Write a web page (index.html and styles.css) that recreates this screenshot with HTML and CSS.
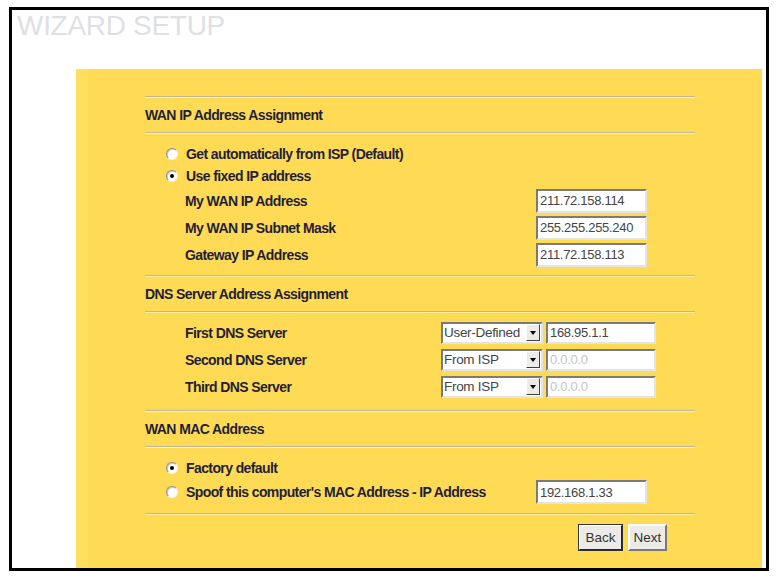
FILE: index.html
```html
<!DOCTYPE html>
<html lang="en">

<head>
    <meta charset="UTF-8">
    <title>Wizard Setup</title>
    <link rel="stylesheet" href="styles.css">
</head>

<body>
    <div class="frame">
        <h1 class="title">WIZARD SETUP</h1>

        <div class="panel">
            <div class="content">
                <div class="sep"></div>
                <div class="section-head">WAN IP Address Assignment</div>
                <div class="sep"></div>

                <div class="choices">
                    <div class="choice"><span class="radio"></span>Get automatically from ISP (Default)</div>
                    <div class="choice"><span class="radio on"></span>Use fixed IP address</div>
                </div>

                <div class="field">
                    <span class="label">My WAN IP Address</span>
                    <input class="text" type="text" value="211.72.158.114">
                </div>
                <div class="field">
                    <span class="label">My WAN IP Subnet Mask</span>
                    <input class="text" type="text" value="255.255.255.240">
                </div>
                <div class="field">
                    <span class="label">Gateway IP Address</span>
                    <input class="text" type="text" value="211.72.158.113">
                </div>

                <div class="sep spaced-7"></div>
                <div class="section-head">DNS Server Address Assignment</div>
                <div class="sep"></div>

                <div class="dns-rows">
                    <div class="dns">
                        <span class="label">First DNS Server</span>
                        <div class="combo">
                            <select>
                                <option selected>User-Defined</option>
                                <option>From ISP</option>
                                <option>None</option>
                            </select>
                            <span class="arrow"></span>
                        </div>
                        <input class="text small" type="text" value="168.95.1.1">
                    </div>
                    <div class="dns">
                        <span class="label">Second DNS Server</span>
                        <div class="combo">
                            <select>
                                <option>User-Defined</option>
                                <option selected>From ISP</option>
                                <option>None</option>
                            </select>
                            <span class="arrow"></span>
                        </div>
                        <input class="text small" type="text" value="0.0.0.0" disabled>
                    </div>
                    <div class="dns">
                        <span class="label">Third DNS Server</span>
                        <div class="combo">
                            <select>
                                <option>User-Defined</option>
                                <option selected>From ISP</option>
                                <option>None</option>
                            </select>
                            <span class="arrow"></span>
                        </div>
                        <input class="text small" type="text" value="0.0.0.0" disabled>
                    </div>
                </div>

                <div class="sep spaced-10"></div>
                <div class="section-head">WAN MAC Address</div>
                <div class="sep"></div>

                <div class="choices">
                    <div class="choice"><span class="radio on"></span>Factory default</div>
                    <div class="choice spoof">
                        <span class="radio"></span>
                        <span class="spoof-label">Spoof this computer's MAC Address - IP Address</span>
                        <input class="text" type="text" value="192.168.1.33">
                    </div>
                </div>

                <div class="sep spaced-8"></div>

                <div class="buttons">
                    <button class="btn default">Back</button>
                    <button class="btn">Next</button>
                </div>
            </div>
        </div>
    </div>
</body>

</html>
```

FILE: styles.css
```css
* {
    box-sizing: border-box;
    margin: 0;
    padding: 0;
}

body {
    background-color: #fff;
    font-family: 'Liberation Sans', Arial, sans-serif;
}

.frame {
    width: 760px;
    height: 564px;
    margin: 7px 0 0 9px;
    border: 3px solid #000;
    display: flex;
    flex-direction: column;
}

.title {
    padding: 2px 0 0 5px;
    font-size: 28px;
    line-height: 28px;
    font-weight: normal;
    letter-spacing: -0.3px;
    color: #dfe0e4;
}

.panel {
    flex: 1;
    margin: 29px 4px 0 64px;
    padding: 27px 0 0 57px;
    background-color: #ffda55;
    border-left: 12px solid #ffe05e;
}

.content {
    width: 550px;
    color: #1f1f3a;
    font-size: 14px;
    font-weight: bold;
    letter-spacing: -0.6px;
    white-space: nowrap;
}

.sep {
    height: 2px;
    border-top: 1px solid #bdb79c;
    border-bottom: 1px solid #fff0a6;
}

.spaced-7 {
    margin-top: 7px;
}

.spaced-8 {
    margin-top: 8px;
}

.spaced-10 {
    margin-top: 10px;
}

.section-head {
    height: 34px;
    line-height: 34px;
}

.choices {
    margin-top: 9px;
    padding-left: 21px;
}

.choice {
    height: 22px;
    display: flex;
    align-items: center;
    gap: 8px;
}

.choice.spoof {
    height: 26px;
}

.spoof-label {
    width: 342px;
}

.radio {
    width: 12px;
    height: 12px;
    border-radius: 50%;
    background-color: #fff;
    border: 1px solid;
    border-color: #8c8c8c #f4f4f4 #f4f4f4 #8c8c8c;
    box-shadow: inset 1px 1px 0 #d0d0d0;
    display: flex;
    align-items: center;
    justify-content: center;
}

.radio.on::after {
    content: '';
    width: 4px;
    height: 4px;
    border-radius: 50%;
    background-color: #000;
}

.field {
    height: 27px;
    padding-left: 40px;
    display: flex;
    align-items: center;
}

.field .label {
    width: 351px;
}

.text {
    width: 111px;
    height: 24px;
    padding: 0 2px;
    border: 2px solid;
    border-color: #7a7a7a #e4e4e4 #e4e4e4 #7a7a7a;
    background-color: #fff;
    color: #444;
    font-family: 'Liberation Sans', Arial, sans-serif;
    font-size: 13px;
    font-weight: normal;
    letter-spacing: -0.3px;
}

.text.small {
    width: 110px;
    height: 22px;
}

.text:disabled {
    color: #c4c4c4;
}

.dns-rows {
    margin-top: 6px;
}

.dns {
    height: 27px;
    padding-left: 40px;
    display: flex;
    align-items: center;
    gap: 3px;
}

.dns .label {
    width: 253px;
}

.combo {
    width: 102px;
    height: 22px;
    display: flex;
    align-items: center;
    border: 2px solid;
    border-color: #7a7a7a #e4e4e4 #e4e4e4 #7a7a7a;
    background-color: #fff;
}

.combo select {
    flex: 1;
    min-width: 0;
    height: 100%;
    border: none;
    outline: none;
    appearance: none;
    -webkit-appearance: none;
    background: transparent;
    padding-left: 1px;
    color: #444;
    font-family: 'Liberation Sans', Arial, sans-serif;
    font-size: 13.5px;
    font-weight: normal;
    letter-spacing: -0.3px;
}

.arrow {
    width: 14px;
    height: 17px;
    margin-right: 1px;
    background-color: #ecebe6;
    border: 1px solid;
    border-color: #fff #404040 #404040 #fff;
    display: flex;
    align-items: center;
    justify-content: center;
}

.arrow::after {
    content: '';
    border-left: 3px solid transparent;
    border-right: 3px solid transparent;
    border-top: 4px solid #000;
}

.buttons {
    margin: 9px 28px 0 0;
    display: flex;
    justify-content: flex-end;
    gap: 5px;
    letter-spacing: normal;
}

.btn {
    height: 27px;
    padding: 0 3px;
    background-color: #ecebe8;
    border: 2px solid;
    color: #333;
    font-family: 'Liberation Sans', Arial, sans-serif;
    font-size: 13.5px;
    cursor: pointer;
}

.btn.default {
    width: 45px;
    border-color: #fff #222 #222 #fff;
    outline: 1px solid #333;
    outline-offset: -1px;
}

.btn:not(.default) {
    width: 39px;
    border-color: #fff #777 #777 #fff;
}
```
